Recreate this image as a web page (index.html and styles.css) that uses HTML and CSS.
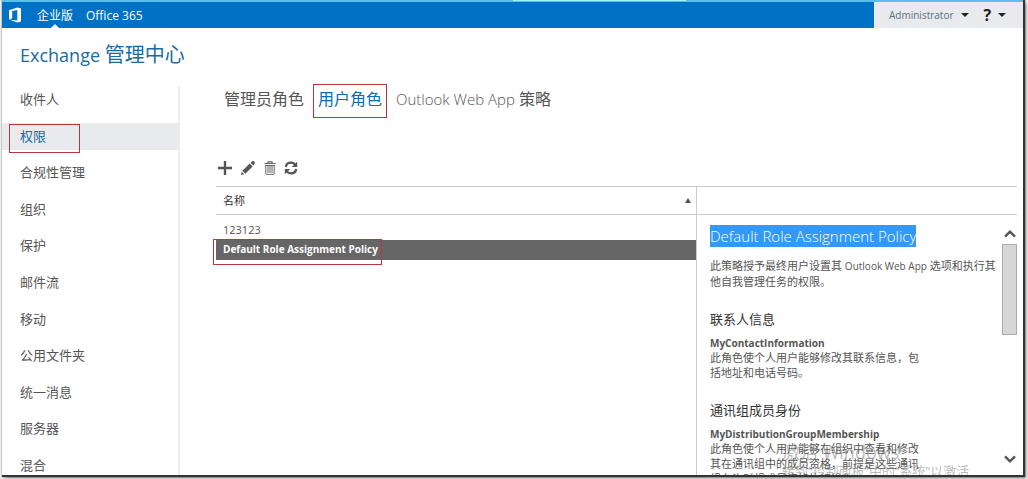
FILE: index.html
```html
<!DOCTYPE html>
<html lang="zh-CN">
<head>
<meta charset="utf-8">
<title>Exchange 管理中心</title>
<link rel="stylesheet" href="styles.css">
</head>
<body>
<div class="window">
  <div class="accent"><span class="accent-tab"></span></div>
  <header class="topbar">
    <nav class="suite">
      <a class="logo" href="#" aria-label="Office"><svg width="16" height="16" viewBox="0 0 16 16"><path fill="#fff" fill-rule="evenodd" d="M1 3.3 9.4.4 13 1.5v12.9l-3.6 1.1L1 12.6l8.3 1V2.9L4.2 4.1v7.2L1 12.6Z"/></svg></a>
      <a class="suite-link current" href="#">企业版</a>
      <a class="suite-link" href="#">Office 365</a>
    </nav>
    <div class="account">
      <button class="user" type="button">Administrator <span class="caret"></span></button>
      <button class="help" type="button" aria-label="帮助"><b>?</b><span class="caret"></span></button>
    </div>
  </header>
  <h1 class="title">Exchange <span class="title-zh">管理中心</span></h1>
  <div class="body">
    <nav class="sidebar">
      <a href="#">收件人</a>
      <a class="selected" href="#">权限<span class="mark mark-nav"></span></a>
      <a href="#">合规性管理</a>
      <a href="#">组织</a>
      <a href="#">保护</a>
      <a href="#">邮件流</a>
      <a href="#">移动</a>
      <a href="#">公用文件夹</a>
      <a href="#">统一消息</a>
      <a href="#">服务器</a>
      <a href="#">混合</a>
    </nav>
    <main class="main">
      <nav class="tabs">
        <a href="#">管理员角色</a>
        <a class="active" href="#">用户角色<span class="mark mark-tab"></span></a>
        <a href="#"><span class="light">Outlook Web App</span> 策略</a>
      </nav>
      <div class="toolbar">
        <button type="button" aria-label="新建"><svg width="14" height="14" viewBox="0 0 14 14"><path d="M7 0v14M0 7h14" stroke="#555" stroke-width="2.4"/></svg></button>
        <button type="button" aria-label="编辑"><svg width="16" height="16" viewBox="0 0 16 16"><path fill="#555" d="m1 15 .7-3.2 2.5 2.5ZM2.4 10.8l7.3-7.3 2.9 2.9-7.3 7.3ZM10.5 2.7l1.3-1.3c.8-.8 1.7-.6 2.4.1.8.8.9 1.6.2 2.4l-1.1 1.6Z"/></svg></button>
        <button type="button" aria-label="删除"><svg width="12" height="14" viewBox="0 0 12 14" fill="none" stroke="#666"><path d="M.5 2.5h11M4 2V.8h4V2" stroke-width="1.2"/><path d="M1.8 4v8.2c0 .8.4 1.2 1.2 1.2h6c.8 0 1.2-.4 1.2-1.2V4M1.5 4.5h9M4 5v7M6 5v7M8 5v7"/></svg></button>
        <button type="button" aria-label="刷新"><svg width="14" height="14" viewBox="0 0 14 14"><path d="M1.8 6C2.2 3.3 4.4 1.7 7 1.7c1.8 0 3.2.7 4.2 2M12.2 8c-.4 2.7-2.6 4.3-5.2 4.3-1.8 0-3.2-.7-4.2-2" fill="none" stroke="#555" stroke-width="2.2"/><path d="M13.2.8v5.3H7.8ZM.8 13.2V7.9h5.4Z" fill="#555"/></svg></button>
      </div>
      <div class="content">
        <section class="listpane">
          <table class="list">
            <thead><tr><th scope="col"><div class="head">名称<span class="sort"></span></div></th></tr></thead>
            <tbody>
              <tr><td>123123</td></tr>
              <tr class="chosen"><td>Default Role Assignment Policy<span class="mark mark-row"></span></td></tr>
            </tbody>
          </table>
        </section>
        <aside class="details">
          <div class="details-head"></div>
          <div class="details-body">
            <article class="text">
              <h2><mark>Default Role Assignment Policy</mark></h2>
              <p>此策略授予最终用户设置其 <span class="small">Outlook Web App</span> 选项和执行其<br>他自我管理任务的权限。</p>
              <h3>联系人信息</h3>
              <h4>MyContactInformation</h4>
              <p>此角色使个人用户能够修改其联系信息，包<br>括地址和电话号码。</p>
              <h3>通讯组成员身份</h3>
              <h4>MyDistributionGroupMembership</h4>
              <p>此角色使个人用户能够在组织中查看和修改<br>其在通讯组中的成员资格，前提是这些通讯<br>组允许对组成员资格执行操作。</p>
            </article>
            <div class="scroll">
              <button type="button" aria-label="向上滚动"><svg width="12" height="8" viewBox="0 0 12 8"><path d="m1 6.7 5-5 5 5" fill="none" stroke="#555" stroke-width="2.4"/></svg></button>
              <span class="thumb"></span>
              <button class="down" type="button" aria-label="向下滚动"><svg width="12" height="8" viewBox="0 0 12 8"><path d="m1 1.3 5 5 5-5" fill="none" stroke="#555" stroke-width="2.4"/></svg></button>
            </div>
          </div>
        </aside>
      </div>
    </main>
  </div>
  <div class="watermark"><div class="wm-title">激活 Windows</div><div>转到“控制面板”中的“系统”以激活</div></div>
</div>
</body>
</html>
```

FILE: styles.css
```css
* { box-sizing: border-box; }
body {
  margin: 0;
  height: 100vh;
  padding: 0 5px 4px 2px;
  display: flex;
  background: #ececec;
  font: 11px/15px "Open Sans", "Noto Sans CJK SC", sans-serif;
  color: #555;
}
a { color: inherit; text-decoration: none; }
button { border: 0; padding: 0; background: none; font: inherit; color: inherit; display: flex; align-items: center; }
h1, h2, h3, h4, p { margin: 0; font-weight: 400; }

.window {
  position: relative;
  flex: 1;
  min-width: 0;
  display: flex;
  flex-direction: column;
  overflow: hidden;
  background: #fff;
  box-shadow: 1px 1px 1px 1px #333, 3px 3px 3px #888;
}
.accent { height: 2px; flex: none; background: #5bc0ee; }
.accent-tab { display: block; height: 1px; width: 17%; margin-left: 50%; background: #a6f3f6; }

.topbar { height: 26px; flex: none; display: flex; justify-content: space-between; background: #0072c6; }
.suite { display: flex; color: #fff; line-height: 26px; }
.logo { display: flex; align-items: center; padding-left: 6px; width: 35px; }
.suite-link { position: relative; margin-right: 13px; font-size: 12px; line-height: 27px; }
.current::after {
  content: "";
  position: absolute;
  left: 14px;
  bottom: 0;
  border: 4px solid transparent;
  border-top: 0;
  border-bottom-color: #fff;
}
.account { display: flex; align-items: center; width: 149px; padding-left: 15px; background: #e9eaed; color: #57717f; }
.user { gap: 7px; font-size: 10px; }
.help { gap: 7px; margin-left: 15px; color: #222; font-size: 16px; }
.caret { border: 4px solid transparent; border-top-color: #222; border-bottom: 0; }

.title { flex: none; padding: 12px 18px 0; font-size: 18px; line-height: 30px; color: #1a6ba0; }
.title-zh { font-size: 20px; }

.body { flex: 1; min-height: 0; display: flex; margin-top: 16px; }
.sidebar {
  width: 178px;
  flex: none;
  display: flex;
  flex-direction: column;
  justify-content: space-between;
  margin-bottom: -4px;
  border-right: 2px solid #ededed;
  font-size: 13px;
  line-height: 27px;
}
.sidebar a { position: relative; padding-left: 18px; }
.sidebar .selected { background: #e9eaed; color: #1a6ba0; }

.mark { position: absolute; border: 1px solid #b5383c; pointer-events: none; }
.mark-nav { left: 7px; top: 1px; width: 71px; height: 29px; }
.mark-tab { left: -5px; top: -2px; right: -5px; height: 34px; }
.mark-row { left: -3px; top: -1px; width: 169px; height: 26px; }

.main { flex: 1; min-width: 0; display: flex; flex-direction: column; padding: 0 6px 0 36px; }
.tabs { display: flex; gap: 14px; padding-left: 8px; font-size: 16px; line-height: 27px; }
.tabs a { position: relative; }
.tabs .active { color: #0a6cb0; }
.light { font-size: 15px; font-weight: 300; }

.toolbar { display: flex; align-items: center; gap: 8px; height: 16px; margin: 47px 0 10px; padding-left: 2px; }
.content { flex: 1; min-height: 0; display: flex; }
.listpane { flex: 3; min-width: 0; }
.list { width: 100%; border-collapse: collapse; }
.list th { height: 28px; padding: 0; border: 1px solid #ccc; border-width: 1px 0; font-weight: 400; color: #333; line-height: 14px; }
.head { display: flex; align-items: center; justify-content: space-between; padding: 0 5px 0 7px; }
.sort { border: 3px solid transparent; border-top: 0; border-bottom: 5px solid #555; }
.list td { position: relative; height: 20px; padding: 0 7px; }
.list tbody tr:first-child td { height: 25px; padding-top: 5px; }
.list .chosen td { background: #666; color: #fff; font-size: 10px; font-weight: 700; }

.details { flex: 2; min-width: 0; display: flex; flex-direction: column; border-left: 1px solid #ccc; }
.details-head { flex: none; height: 29px; border: 1px solid #ccc; border-width: 1px 0; }
.details-body { flex: 1; min-height: 0; display: flex; justify-content: space-between; }
.text { padding: 10px 0 0 13px; white-space: nowrap; min-width: 0; }
.text h2 { margin-bottom: 11px; font-size: 15px; line-height: 22px; font-weight: 300; }
mark { display: inline-block; background: #3399f5; color: #fff; }
.text h3 { margin: 20px 0 8px; font-size: 13px; line-height: 20px; color: #333; }
.text h4 { font-size: 10px; line-height: 13px; font-weight: 700; }
.small { font-size: 10px; }
.scroll { flex: none; width: 15px; display: flex; flex-direction: column; padding: 15px 0 12px; }
.scroll button { justify-content: center; }
.thumb { height: 91px; margin-top: 6px; border: 1px solid #aaa; background: #d6d6d6; }
.scroll .down { margin-top: auto; }

.watermark { position: absolute; left: 780px; bottom: -4px; font-size: 13px; line-height: 16px; color: rgba(120, 120, 120, .5); white-space: nowrap; pointer-events: none; }
.wm-title { font-size: 18px; line-height: 22px; }
```
